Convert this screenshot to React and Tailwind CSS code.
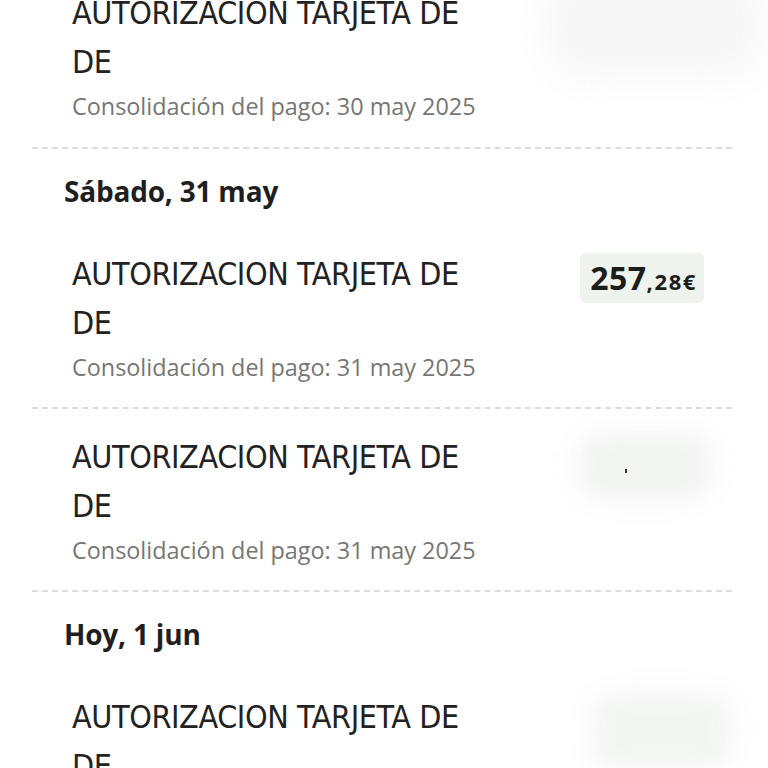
import React from 'react';

const rows = [
  { day: null, date: '30 may 2025', amount: null, blur: 'big', first: true },
  { day: 'Sábado, 31 may', date: '31 may 2025', amount: { int: '257', dec: ',28€' } },
  { day: null, date: '31 may 2025', amount: null, blur: 'small' },
  { day: 'Hoy, 1 jun', date: '1 jun 2025', amount: null, blur: 'last' },
];

const titleFont = { fontFamily: '"Liberation Sans Narrow", "DejaVu Sans Condensed", "Liberation Sans", sans-serif' };

const Amount = ({ amount, blur }) => {
  if (amount) {
    return (
      <div className="mt-[3px] h-[50px] pl-[10px] pr-[7px] rounded-md bg-[#eef3ee] flex items-baseline pt-[7px] text-[#1d1d1b] font-bold font-['Open_Sans',sans-serif]">
        <span className="text-[32px] leading-[36px] tracking-[0.5px]">{amount.int}</span>
        <span className="text-[22px] leading-[36px] tracking-[1.6px]">{amount.dec}</span>
      </div>
    );
  }
  if (blur === 'big') {
    return <div className="mt-[-20px] mr-[-60px] w-[220px] h-[110px] rounded-[40px] bg-[#f6f7f6] blur-lg" />;
  }
  if (blur === 'last') {
    return <div className="mt-[-2px] mr-[-30px] w-[145px] h-[80px] rounded-[24px] bg-[#f4f6f4] blur-md" />;
  }
  return (
    <div className="relative mt-[-2px] mr-[-10px] w-[138px] h-[70px]">
      <div className="w-full h-full rounded-[24px] bg-[#f3f5f3] blur-md" />
      <div className="absolute left-[49px] top-[38px] w-[2px] h-[4px] bg-[#333333]" />
    </div>
  );
};

const Row = ({ row }) => (
  <div className={`flex justify-between pl-[40px] pr-[28px] ${row.first ? 'pt-0' : 'pt-[24px]'} ${row.first ? 'pb-[24px]' : 'pb-[23px]'}`}>
    <div className="min-w-0">
      <div style={titleFont} className="text-[32px] leading-[49px] tracking-[-0.4px] text-[#222222]">
        <div>AUTORIZACION TARJETA DE</div>
        <div>DE</div>
      </div>
      <div className="mt-[2px] text-[23.4px] leading-[34px] text-[#767676] font-['Open_Sans',sans-serif]">
        Consolidación del pago: {row.date}
      </div>
    </div>
    <Amount amount={row.amount} blur={row.blur} />
  </div>
);

export default function App() {
  return (
    <div className="w-[768px] h-[768px] overflow-hidden bg-white">
      <div className="mt-[-11px] pl-[32px] pr-[36px]">
        {rows.map((row, i) => (
          <div key={i}>
            {i > 0 && (
              <div className="border-t-2 border-dashed border-[#dcdcdc]" />
            )}
            {row.day && (
              <div className="pl-[32px] pt-[22px] pb-[15px] text-[28px] leading-[40px] font-bold tracking-[-0.2px] text-[#1f1f1f] font-['Open_Sans',sans-serif]">
                {row.day}
              </div>
            )}
            <Row row={row} />
          </div>
        ))}
      </div>
    </div>
  );
}
